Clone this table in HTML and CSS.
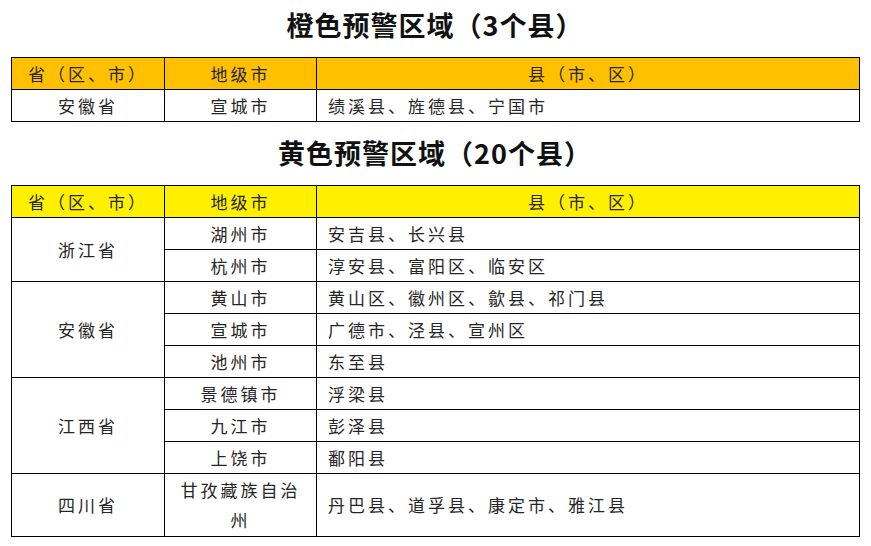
FILE: index.html
```html
<!DOCTYPE html>
<html lang="zh-CN">
<head>
<meta charset="utf-8">
<link rel="stylesheet" href="styles.css">
</head>
<body>
<div class="page">
  <h2 class="title first">橙色预警区域（3个县）</h2>
  <table class="grid">
    <colgroup><col class="c1"><col class="c2"><col class="c3"></colgroup>
    <tr class="head orange"><td>省（区、市）</td><td>地级市</td><td>县（市、区）</td></tr>
    <tr><td>安徽省</td><td>宣城市</td><td class="list">绩溪县、旌德县、宁国市</td></tr>
  </table>
  <h2 class="title second">黄色预警区域（20个县）</h2>
  <table class="grid">
    <colgroup><col class="c1"><col class="c2"><col class="c3"></colgroup>
    <tr class="head yellow"><td>省（区、市）</td><td>地级市</td><td>县（市、区）</td></tr>
    <tr><td rowspan="2">浙江省</td><td>湖州市</td><td class="list">安吉县、长兴县</td></tr>
    <tr><td>杭州市</td><td class="list">淳安县、富阳区、临安区</td></tr>
    <tr><td rowspan="3">安徽省</td><td>黄山市</td><td class="list">黄山区、徽州区、歙县、祁门县</td></tr>
    <tr><td>宣城市</td><td class="list">广德市、泾县、宣州区</td></tr>
    <tr><td>池州市</td><td class="list">东至县</td></tr>
    <tr><td rowspan="3">江西省</td><td>景德镇市</td><td class="list">浮梁县</td></tr>
    <tr><td>九江市</td><td class="list">彭泽县</td></tr>
    <tr><td>上饶市</td><td class="list">鄱阳县</td></tr>
    <tr class="tall"><td>四川省</td><td class="wrap">甘孜藏族自治州</td><td class="list">丹巴县、道孚县、康定市、雅江县</td></tr>
  </table>
</div>
</body>
</html>
```
FILE: styles.css
```css
html, body {
  margin: 0;
  padding: 0;
  background: #fff;
}
.page {
  width: 871px;
  padding-left: 11px;
  box-sizing: border-box;
  font-family: "Noto Sans CJK SC", "Noto Sans", sans-serif;
  color: #262626;
}
.title {
  width: 848px;
  margin: 7px 0 7px 0;
  height: 50px;
  line-height: 50px;
  text-align: center;
  font-size: 27px;
  font-weight: 700;
  color: #111;
  letter-spacing: 1px;
}
.title.first {
  margin-top: 0;
}
.title.second {
  margin-top: 6px;
}
.grid {
  width: 848px;
  border-collapse: collapse;
  table-layout: fixed;
  font-size: 17px;
  letter-spacing: 3px;
}
.c1 { width: 153px; }
.c2 { width: 152px; }
.c3 { width: 543px; }
.grid td {
  border: 1px solid #000;
  height: 31px;
  padding: 0 8px;
  text-align: center;
  vertical-align: middle;
  line-height: 30px;
  white-space: nowrap;
}
.grid td.list {
  text-align: left;
  padding-left: 11px;
}
.grid td.wrap {
  white-space: normal;
}
.grid tr.tall td {
  height: 62px;
}
.orange td { background: #ffc000; }
.yellow td { background: #fff000; }
```
